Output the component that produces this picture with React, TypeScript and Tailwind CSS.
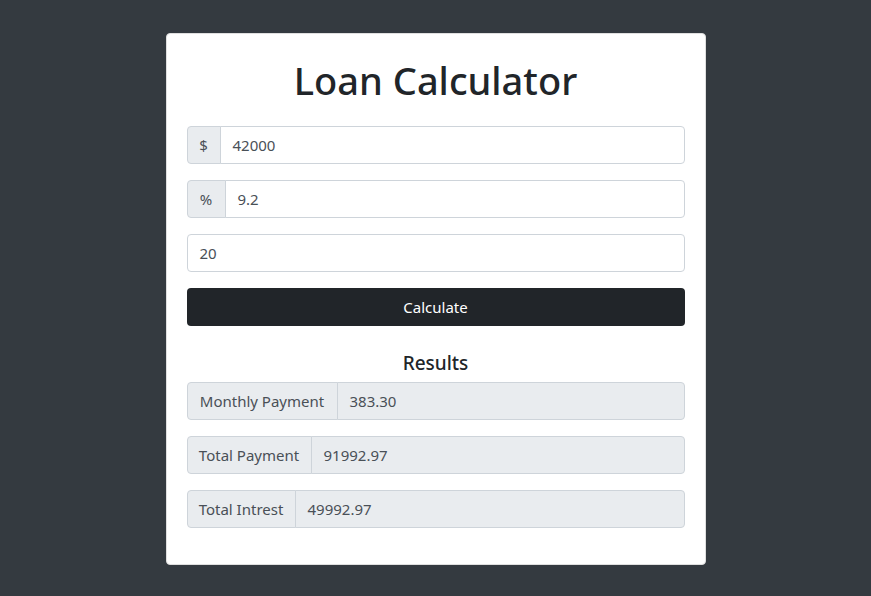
import React from "react";

function Addon({ children, w }: { children: React.ReactNode; w: string }) {
  return (
    <div
      className={`flex items-center justify-center ${w} h-[38px] shrink-0 bg-[#e9ecef] border border-[#ced4da] rounded-l-[4px] text-[#495057] text-[15px]`}
    >
      {children}
    </div>
  );
}

function InputGroup({ label, w, value }: { label: string; w: string; value: string }) {
  return (
    <div className="flex h-[38px]">
      <Addon w={w}>{label}</Addon>
      <div className="flex-1 h-[38px] -ml-px border border-[#ced4da] rounded-r-[4px] bg-white flex items-center px-3 text-[#495057] text-[15px]">
        {value}
      </div>
    </div>
  );
}

function ResultRow({ label, w, value }: { label: string; w: string; value: string }) {
  return (
    <div className="flex h-[38px]">
      <div
        className={`flex items-center justify-center ${w} h-[38px] shrink-0 bg-[#e9ecef] border border-[#ced4da] rounded-l-[4px] text-[#495057] text-[15px]`}
      >
        {label}
      </div>
      <div className="flex-1 h-[38px] -ml-px border border-[#ced4da] rounded-r-[4px] bg-[#e9ecef] flex items-center px-3 text-[#495057] text-[15px]">
        {value}
      </div>
    </div>
  );
}

export default function App() {
  return (
    <div
      className="min-h-[596px] w-full bg-[#343a40] flex justify-center pt-[33px]"
      style={{ fontFamily: '"Noto Sans", "Open Sans", Arial, sans-serif' }}
    >
      <div className="w-[540px] h-[532px] bg-white border border-[#dfdfdf] rounded-[4px] px-5 pt-5 pb-5 flex flex-col">
        <h1 className="text-center text-[38px] leading-[48px] font-medium text-[#212529] mt-[2px] mb-[22px]">
          Loan Calculator
        </h1>
        <div className="flex flex-col gap-4">
          <InputGroup label="$" w="w-[34px]" value="42000" />
          <InputGroup label="%" w="w-[39px]" value="9.2" />
          <div className="h-[38px] border border-[#ced4da] rounded-[4px] bg-white flex items-center px-3 text-[#495057] text-[15px]">
            20
          </div>
          <div className="h-[38px] bg-[#212529] rounded-[4px] flex items-center justify-center text-white text-[15px]">
            Calculate
          </div>
        </div>
        <h5 className="text-center text-[19px] leading-[24px] font-medium text-[#212529] mt-[25px] mb-[7px]">
          Results
        </h5>
        <div className="flex flex-col gap-4">
          <ResultRow label="Monthly Payment" w="w-[151px]" value="383.30" />
          <ResultRow label="Total Payment" w="w-[125px]" value="91992.97" />
          <ResultRow label="Total Intrest" w="w-[109px]" value="49992.97" />
        </div>
      </div>
    </div>
  );
}
